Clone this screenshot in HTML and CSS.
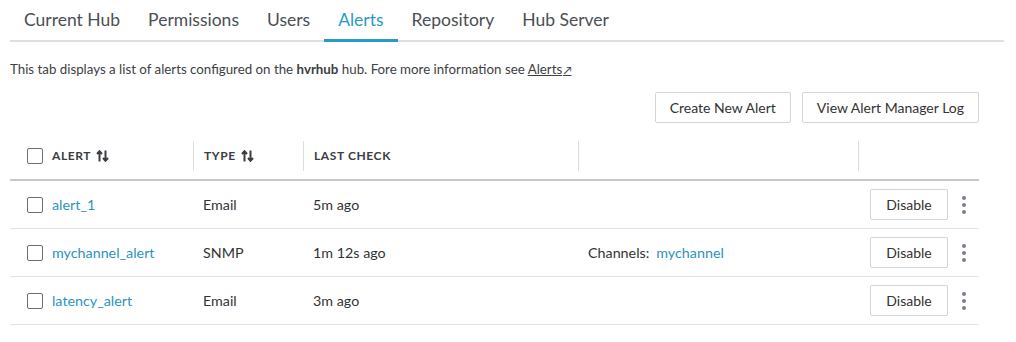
FILE: index.html
```html
<!DOCTYPE html>
<html lang="en">
<head>
    <meta charset="UTF-8">
    <title>Alerts - Hub</title>
    <link rel="stylesheet" href="styles.css">
</head>
<body>
    <!-- Tabs -->
    <nav class="tabs">
        <a class="tab">Current Hub</a>
        <a class="tab">Permissions</a>
        <a class="tab">Users</a>
        <a class="tab active">Alerts</a>
        <a class="tab">Repository</a>
        <a class="tab">Hub Server</a>
    </nav>

    <p class="intro">This tab displays a list of alerts configured on the <b>hvrhub</b> hub. Fore more information see <a class="doc-link">Alerts<span class="ext">&#8599;</span></a></p>

    <div class="toolbar">
        <button class="btn">Create New Alert</button>
        <button class="btn">View Alert Manager Log</button>
    </div>

    <!-- Alerts table -->
    <div class="table">
        <div class="row head">
            <div class="cell c-name"><span class="box"></span>ALERT
                <svg class="sort" width="13" height="12" viewBox="0 0 13 12"><path d="M3.5 11.5V1.5M1 4L3.5 1.2L6 4M9.5 0.5V10.5M7 8L9.5 10.8L12 8" fill="none" stroke="#3a3d41" stroke-width="2"/></svg>
            </div>
            <div class="cell c-type">TYPE
                <svg class="sort" width="13" height="12" viewBox="0 0 13 12"><path d="M3.5 11.5V1.5M1 4L3.5 1.2L6 4M9.5 0.5V10.5M7 8L9.5 10.8L12 8" fill="none" stroke="#3a3d41" stroke-width="2"/></svg>
            </div>
            <div class="cell c-check">LAST CHECK</div>
            <div class="cell c-extra"></div>
            <div class="cell c-actions"></div>
        </div>
        <div class="row">
            <div class="cell c-name"><span class="box"></span><a class="link">alert_1</a></div>
            <div class="cell c-type">Email</div>
            <div class="cell c-check">5m ago</div>
            <div class="cell c-extra"></div>
            <div class="cell c-actions"><button class="btn small">Disable</button><span class="kebab"><i></i><i></i><i></i></span></div>
        </div>
        <div class="row">
            <div class="cell c-name"><span class="box"></span><a class="link">mychannel_alert</a></div>
            <div class="cell c-type">SNMP</div>
            <div class="cell c-check">1m 12s ago</div>
            <div class="cell c-extra">Channels:<a class="link channel">mychannel</a></div>
            <div class="cell c-actions"><button class="btn small">Disable</button><span class="kebab"><i></i><i></i><i></i></span></div>
        </div>
        <div class="row">
            <div class="cell c-name"><span class="box"></span><a class="link">latency_alert</a></div>
            <div class="cell c-type">Email</div>
            <div class="cell c-check">3m ago</div>
            <div class="cell c-extra"></div>
            <div class="cell c-actions"><button class="btn small">Disable</button><span class="kebab"><i></i><i></i><i></i></span></div>
        </div>
    </div>
</body>
</html>
```

FILE: styles.css
```css
body {
    margin: 0;
    padding: 0 12px 0 10px;
    font-family: Lato, "Open Sans", sans-serif;
    color: #333;
    background: #fff;
}

/* Tabs along the top */
.tabs {
    display: flex;
    border-bottom: 2px solid #dcdfe3;
    height: 40px;
}

.tab {
    padding: 0 14px;
    font-size: 17.5px;
    line-height: 40px;
    color: #4b4f55;
    border-bottom: 3px solid transparent;
    margin-bottom: -2px;
}

.tab.active {
    color: #2a9bc4;
    border-bottom-color: #2a9bc4;
}

.intro {
    margin: 19px 0 0;
    font-size: 13.3px;
    color: #3d4044;
}

.doc-link {
    color: #3d4044;
    text-decoration: underline;
}

.ext {
    font-size: 11px;
    margin-left: 1px;
}

/* Buttons above the table */
.toolbar {
    display: flex;
    justify-content: flex-end;
    gap: 11px;
    margin: 15px 25px 0 0;
}

.btn {
    height: 31px;
    padding: 0 14px;
    font-family: inherit;
    font-size: 14px;
    color: #333;
    background: #fff;
    border: 1px solid #d2d5d9;
    border-radius: 2px;
}

.btn.small {
    width: 78px;
    padding: 0;
}

/* Table */
.table {
    margin: 13px 25px 0 0;
}

.row {
    display: flex;
    align-items: center;
    height: 47px;
    border-bottom: 1px solid #e1e3e6;
    font-size: 14.3px;
}

.row.head {
    height: 45px;
    padding-bottom: 4px;
    box-sizing: border-box;
    border-bottom: 2px solid #c5c8cc;
    font-size: 12px;
    font-weight: bold;
    letter-spacing: 0.6px;
    color: #3a3d41;
}

.cell {
    display: flex;
    align-items: center;
    padding-left: 10px;
    box-sizing: border-box;
}

.head .cell {
    height: 30px;
    border-left: 1px solid #dcdee1;
}

.head .cell.c-name {
    border-left: none;
}

.c-name {
    width: 183px;
    padding-left: 17px;
}

.c-type {
    width: 110px;
}

.c-check {
    width: 275px;
}

.c-extra {
    width: 280px;
}

.c-actions {
    flex: 1;
    justify-content: flex-end;
    padding-right: 13px;
}

.box {
    width: 14px;
    height: 14px;
    border: 1px solid #6b6f75;
    border-radius: 2px;
    margin-right: 9px;
}

.sort {
    margin-left: 5px;
}

.link {
    color: #2a93c0;
}

.channel {
    margin-left: 7px;
}

.kebab {
    display: flex;
    flex-direction: column;
    gap: 3px;
    margin-left: 14px;
}

.kebab i {
    width: 4px;
    height: 4px;
    border-radius: 50%;
    background: #7a7f8f;
}
```
